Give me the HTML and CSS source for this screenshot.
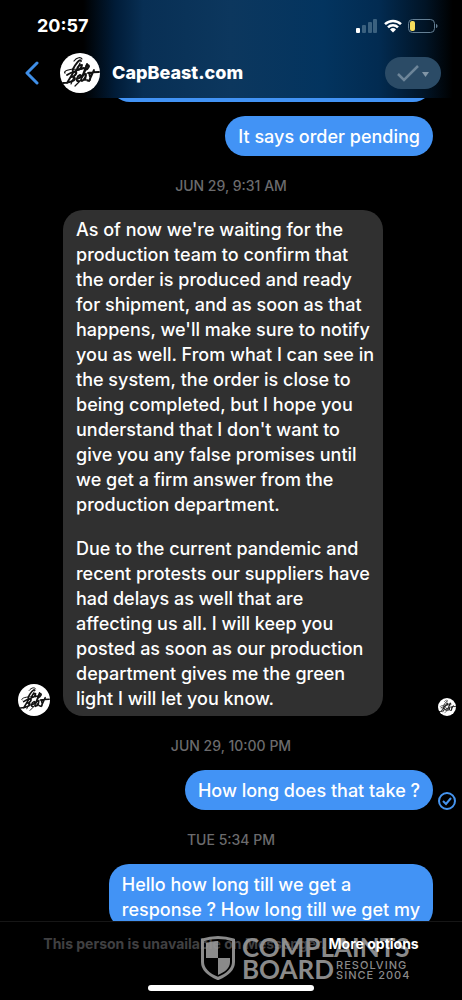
FILE: index.html
```html
<!DOCTYPE html>
<html lang="en">
<head>
<meta charset="utf-8">
<meta name="viewport" content="width=device-width, initial-scale=1">
<title>CapBeast.com</title>
<link rel="stylesheet" href="styles.css">
</head>
<body>
<svg class="defs" aria-hidden="true">
  <symbol id="logo" viewBox="0 0 40 40">
    <circle cx="20" cy="20" r="20" fill="#fff"/>
    <g fill="none" stroke="#111" stroke-linecap="round" stroke-linejoin="round">
      <path stroke-width="1.9" d="M21 8c-1-3-6 4-8 8-1 4 1 4 5 0M21 12c-3 0-5 5-3 5s4-4 4-5l-1 4 3-1M27 11l-5 13M26 13c3-2 4 0 2 2-1 2-3 2-3 1"/>
      <path stroke-width="1.9" d="M13 20L7 30M7 22c6-4 11-4 9-1-1 2-4 3-5 3 5-1 5 3 1 4-3 2-6 2-9 2M17 26c4-1 5-4 3-4-3 1-5 7-1 6M26 21c-4 0-6 7-4 7 2-1 4-5 4-6l-1 5M31 20c-4 1 1 4-1 7-1 1-3 1-3 0M34 17l-5 11M28 20c4-1 7-1 11-1"/>
      <path stroke-width="1.2" d="M5 20c-2-2 4-4 12-4M14 8c3-4 7-4 8-2M20 10l-9 21M21 27l-6 6M28 12l-4 9"/>
    </g>
  </symbol>
</svg>
<div class="app">
  <header class="header">
    <div class="status">
      <span class="clock">20:57</span>
      <div class="indicators">
        <svg width="22" height="14" viewBox="0 0 22 14" aria-label="Signal"><rect y="9" width="4" height="5" rx="1" fill="#fff"/><g fill="#3b617f"><rect x="6" y="6" width="4" height="8" rx="1"/><rect x="12" y="3" width="4" height="11" rx="1"/><rect x="17" y="0" width="4" height="14" rx="1"/></g></svg>
        <svg width="18" height="14" viewBox="0 0 18 14" aria-label="Wi-Fi"><g fill="none" stroke="#fff" stroke-width="2.5"><path d="M1 5.2a11.5 11.5 0 0 1 16 0M4 8.4a7 7 0 0 1 10 0"/></g><path fill="#fff" d="M6 10.4a4.4 4.4 0 0 1 6 0l-3 3.2z"/></svg>
        <svg width="30" height="14" viewBox="0 0 30 14" aria-label="Battery"><rect x=".5" y=".5" width="26" height="13" rx="4" fill="none" stroke="#647f94"/><rect x="2" y="2" width="5" height="10" rx="2" fill="#f5dc5c"/><path fill="#647f94" d="M28 5c2 0 2 4 0 4z"/></svg>
      </div>
    </div>
    <div class="bar">
      <button class="back" aria-label="Back"><svg width="14" height="24" viewBox="0 0 14 24"><path d="M12 2L2 12l10 10" fill="none" stroke="#3f8fe8" stroke-width="3" stroke-linecap="round" stroke-linejoin="round"/></svg></button>
      <svg class="avatar avatar-large" role="img" aria-label="CapBeast"><use href="#logo"/></svg>
      <h1 class="name">CapBeast.com</h1>
      <button class="done" aria-label="Mark as done"><svg width="56" height="32" viewBox="0 0 56 32"><path d="M13 17l6 6L33 9" fill="none" stroke="#6d8599" stroke-width="2.5"/><path d="M37 15h7l-3.500 5z" fill="#8196a7"/></svg></button>
    </div>
  </header>
  <main class="thread">
    <div class="bubble sent previous"></div>
    <div class="bubble sent"><p>It says order pending</p></div>
    <time class="time">JUN 29, 9:31 AM</time>
    <div class="row">
      <svg class="avatar avatar-medium" role="img" aria-label="CapBeast"><use href="#logo"/></svg>
      <div class="bubble received">
        <p>As of now we're waiting for the
production team to confirm that
the order is produced and ready
for shipment, and as soon as that
happens, we'll make sure to notify
you as well. From what I can see in
the system, the order is close to
being completed, but I hope you
understand that I don't want to
give you any false promises until
we get a firm answer from the
production department.</p>
        <p>Due to the current pandemic and
recent protests our suppliers have
had delays as well that are
affecting us all. I will keep you
posted as soon as our production
department gives me the green
light I will let you know.</p>
      </div>
      <svg class="avatar avatar-small" role="img" aria-label="Seen"><use href="#logo"/></svg>
    </div>
    <time class="time">JUN 29, 10:00 PM</time>
    <div class="row">
      <div class="bubble sent"><p>How long does that take ?</p></div>
      <svg class="delivered" width="18" height="18" viewBox="0 0 18 18" aria-label="Delivered"><g fill="none" stroke="#4594ef" stroke-width="2"><circle cx="9" cy="9" r="8"/><path d="M5 9l3 3 5-6"/></g></svg>
    </div>
    <time class="time">TUE 5:34 PM</time>
    <div class="bubble sent"><p>Hello how long till we get a
response ? How long till we get my</p></div>
  </main>
  <footer class="footer">
    <p class="notice">This person is unavailable on Messenger. <a class="more" href="#">More options</a></p>
    <div class="watermark">
      <svg width="34" height="44" viewBox="0 0 34 44" aria-hidden="true"><path d="M17 1.500Q25 1.500 32.500 4v22c0 8-7 13-15.500 16.500C8.500 39 1.500 34 1.500 26V4Q9 1.500 17 1.500z" fill="none" stroke="#999" stroke-width="3"/><path fill="#999" d="M17 5v17H5V7q6-2 12-2zM17 22h12v4c0 6-5 10-12 13z"/></svg>
      <div class="brand">
        <span class="brand-top">COMPLAINTS</span>
        <div class="brand-bottom"><span class="brand-board">BOARD</span><span class="tagline">RESOLVING<br>SINCE 2004</span></div>
      </div>
    </div>
    <div class="home"></div>
  </footer>
</div>
</body>
</html>
```
FILE: styles.css
```css
* { box-sizing: border-box; }
body { margin: 0; background: #000; color: #fff; font-family: Inter, "Liberation Sans", sans-serif; }
h1, p { margin: 0; }
button { padding: 0; border: 0; background: none; }
.defs { position: absolute; width: 0; height: 0; }
.app { display: flex; flex-direction: column; height: 100vh; overflow: hidden; }

.header { flex: none; padding-bottom: 4px; background: linear-gradient(90deg, #000 18%, #011c38 25%, #082f54 31%, #0c375e 50%, #03345f 70%, #022b51 82%, #011426 92%, #000 98%); }
.status { display: flex; justify-content: space-between; align-items: center; height: 52px; padding: 0 24px 0 37px; }
.clock { font-size: 18px; line-height: 24px; font-weight: 700; }
.indicators { display: flex; gap: 6px; }
.bar { display: flex; align-items: center; height: 42px; padding: 0 21px 0 25px; }
.back { display: flex; margin-right: 21px; }
.avatar { flex: none; }
.avatar-large { width: 40px; height: 40px; }
.avatar-medium { width: 32px; height: 32px; margin-right: 13px; }
.avatar-small { width: 18px; height: 18px; margin-left: auto; }
.name { flex: 1; padding-left: 12px; font-size: 18px; line-height: 24px; font-weight: 800; }
.done { display: flex; border-radius: 16px; background: #2b4b66; }

.thread { display: flex; flex: 1; flex-direction: column; min-height: 0; overflow: hidden; }
.thread > * { flex: none; }
.bubble { padding: 8px 13px 7px; border-radius: 20px; font-size: 18px; line-height: 25px; font-weight: 500; white-space: pre-line; }
.sent { align-self: flex-end; margin-right: 29px; background: #4293f5; }
.previous { width: 70%; height: 40px; margin-top: -36px; margin-bottom: 14px; }
.received { display: flex; flex-direction: column; gap: 19px; width: 320px; padding: 7px 8px 5px 13px; background: #303030; }
.time { padding: 20px 0 14px; text-align: center; font-size: 14px; line-height: 20px; font-weight: 500; color: #6b6b6d; }
.row { display: flex; justify-content: flex-end; align-items: flex-end; padding: 0 6px 0 18px; }
.row .sent { margin-right: 5px; }

.footer { position: relative; flex: none; display: flex; flex-direction: column; align-items: center; justify-content: space-between; height: 79px; padding: 13px 0 9px; border-top: 1px solid #161616; }
.notice { font-size: 14px; line-height: 18px; font-weight: 700; color: #404042; white-space: nowrap; }
.more { position: relative; z-index: 2; color: #fff; text-decoration: none; }
.home { width: 166px; height: 6px; border-radius: 3px; background: #fff; }
.watermark { position: absolute; top: 14px; right: 49px; display: flex; gap: 7px; color: #999; opacity: .9; font-family: Lato, sans-serif; font-weight: 700; }
.brand { width: 171px; }
.brand-top, .brand-board { display: block; font-size: 26px; line-height: 22px; }
.brand-bottom { display: flex; gap: 2px; }
.tagline { padding-top: 2px; font-family: Inter, sans-serif; font-size: 11px; line-height: 10px; font-weight: 500; letter-spacing: 1px; white-space: nowrap; }
```
